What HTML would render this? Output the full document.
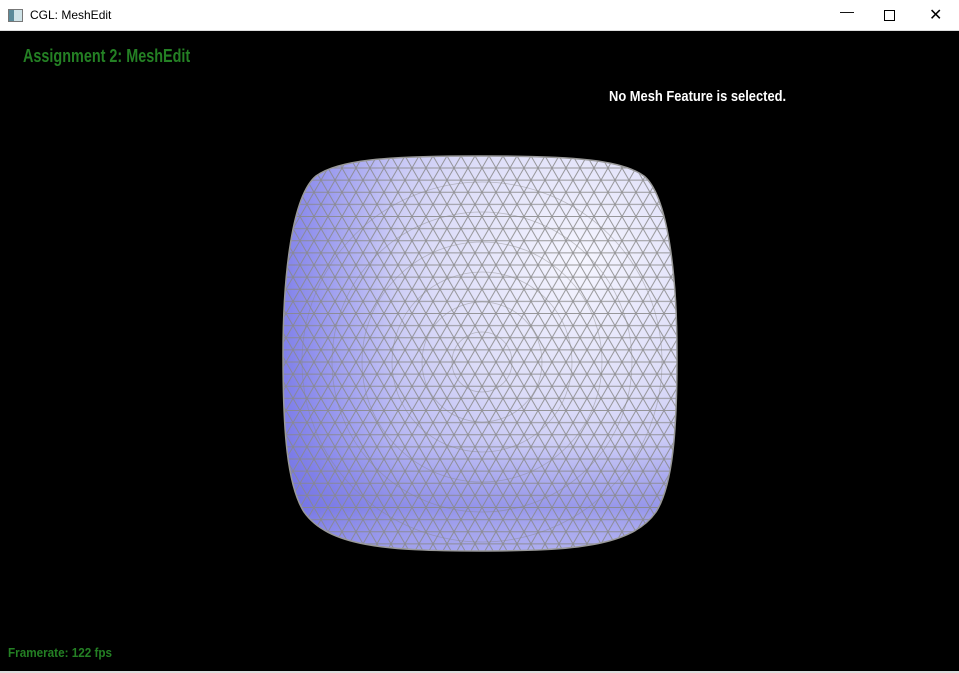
<!DOCTYPE html>
<html><head><meta charset="utf-8"><style>
html,body{margin:0;padding:0;width:959px;height:673px;overflow:hidden;background:#000;font-family:"Liberation Sans",sans-serif}
.tb{position:absolute;left:0;top:0;width:959px;height:30px;background:#fff;border-bottom:1px solid #ddd}
.tb .t{position:absolute;left:30px;top:8px;font-size:12px;color:#000}
.ic{position:absolute;left:8px;top:9px;width:13px;height:11px;border:1px solid #777;background:linear-gradient(90deg,#5a8a9a 40%,#cfe3e8 40%)}
.ctl{position:absolute;top:6px;font-size:14px;color:#000}
.txt{position:absolute;font-weight:bold;white-space:nowrap;transform-origin:0 0}
</style></head><body>
<div class="tb"><div class="ic"></div><div class="t">CGL: MeshEdit</div>
<div class="ctl" style="left:840px;top:3px">&#8212;</div>
<div style="position:absolute;left:884px;top:10px;width:9px;height:9px;border:1px solid #000"></div>
<div class="ctl" style="left:929px;top:5px;font-size:16px">&#10005;</div></div>
<div style="position:absolute;left:0;top:671px;width:959px;height:2px;background:#ddd"></div>
<div class="txt" style="left:23px;top:46px;font-size:18px;color:#248024;transform:scaleX(0.8)">Assignment 2: MeshEdit</div>
<div class="txt" style="left:609px;top:88px;font-size:15px;color:#fff;transform:scaleX(0.86)">No Mesh Feature is selected.</div>
<div class="txt" style="left:8px;top:645px;font-size:13px;color:#248024;transform:scaleX(0.9)">Framerate: 122 fps</div>
<svg width="959" height="673" style="position:absolute;left:0;top:0">
<defs>
<radialGradient id="g" cx="580" cy="260" r="420" gradientUnits="userSpaceOnUse">
<stop offset="0" stop-color="#f6f6ff"/><stop offset="0.35" stop-color="#dcdcf8"/><stop offset="0.65" stop-color="#b0b0f2"/><stop offset="1" stop-color="#7878e6"/></radialGradient>
<linearGradient id="l" x1="283" x2="400" y1="0" y2="0" gradientUnits="userSpaceOnUse">
<stop offset="0" stop-color="#6a6ae6" stop-opacity="0.6"/><stop offset="1" stop-color="#8080ee" stop-opacity="0"/></linearGradient>
<linearGradient id="bt" x1="0" x2="0" y1="440" y2="552" gradientUnits="userSpaceOnUse">
<stop offset="0" stop-color="#7070e0" stop-opacity="0"/><stop offset="0.6" stop-color="#7070e0" stop-opacity="0.45"/><stop offset="1" stop-color="#c0c0f0" stop-opacity="0.2"/></linearGradient>
<pattern id="p" width="14" height="24.25" patternUnits="userSpaceOnUse" x="482" y="362">
<path d="M0 0H14M0 12.12H14M0 24.25H14M0 0L14 24.25M14 0L0 24.25M7 -12.12L-7 12.12M7 12.12L21 36.37M-7 12.12L7 36.37M21 12.12L7 36.37M7 12.12L21 -12.12" stroke="#888" stroke-width="1" fill="none"/></pattern>
<clipPath id="c"><path d="M480 156C575 156 622 160 644 176C668 196 677 275 677 355C677 430 673 485 656 512C632 546 575 551 480 551C385 551 328 546 304 512C287 485 283 430 283 355C283 275 292 196 316 176C338 160 385 156 480 156Z"/></clipPath>
</defs>
<g clip-path="url(#c)">
<rect x="280" y="150" width="400" height="405" fill="url(#g)"/>
<rect x="280" y="150" width="400" height="405" fill="url(#l)"/>
<rect x="280" y="150" width="400" height="405" fill="url(#bt)"/>
<rect x="280" y="150" width="400" height="405" fill="url(#p)" opacity="0.85"/>
<g fill="none" stroke="#888" stroke-width="0.8" opacity="0.5">
<circle cx="482" cy="362" r="30"/><circle cx="482" cy="362" r="60"/><circle cx="482" cy="362" r="90"/><circle cx="482" cy="362" r="120"/><circle cx="482" cy="362" r="150"/><circle cx="482" cy="362" r="180"/></g>
</g>
<path d="M480 156C575 156 622 160 644 176C668 196 677 275 677 355C677 430 673 485 656 512C632 546 575 551 480 551C385 551 328 546 304 512C287 485 283 430 283 355C283 275 292 196 316 176C338 160 385 156 480 156Z" fill="none" stroke="#999" stroke-width="1.5"/>
</svg>
</body></html>
